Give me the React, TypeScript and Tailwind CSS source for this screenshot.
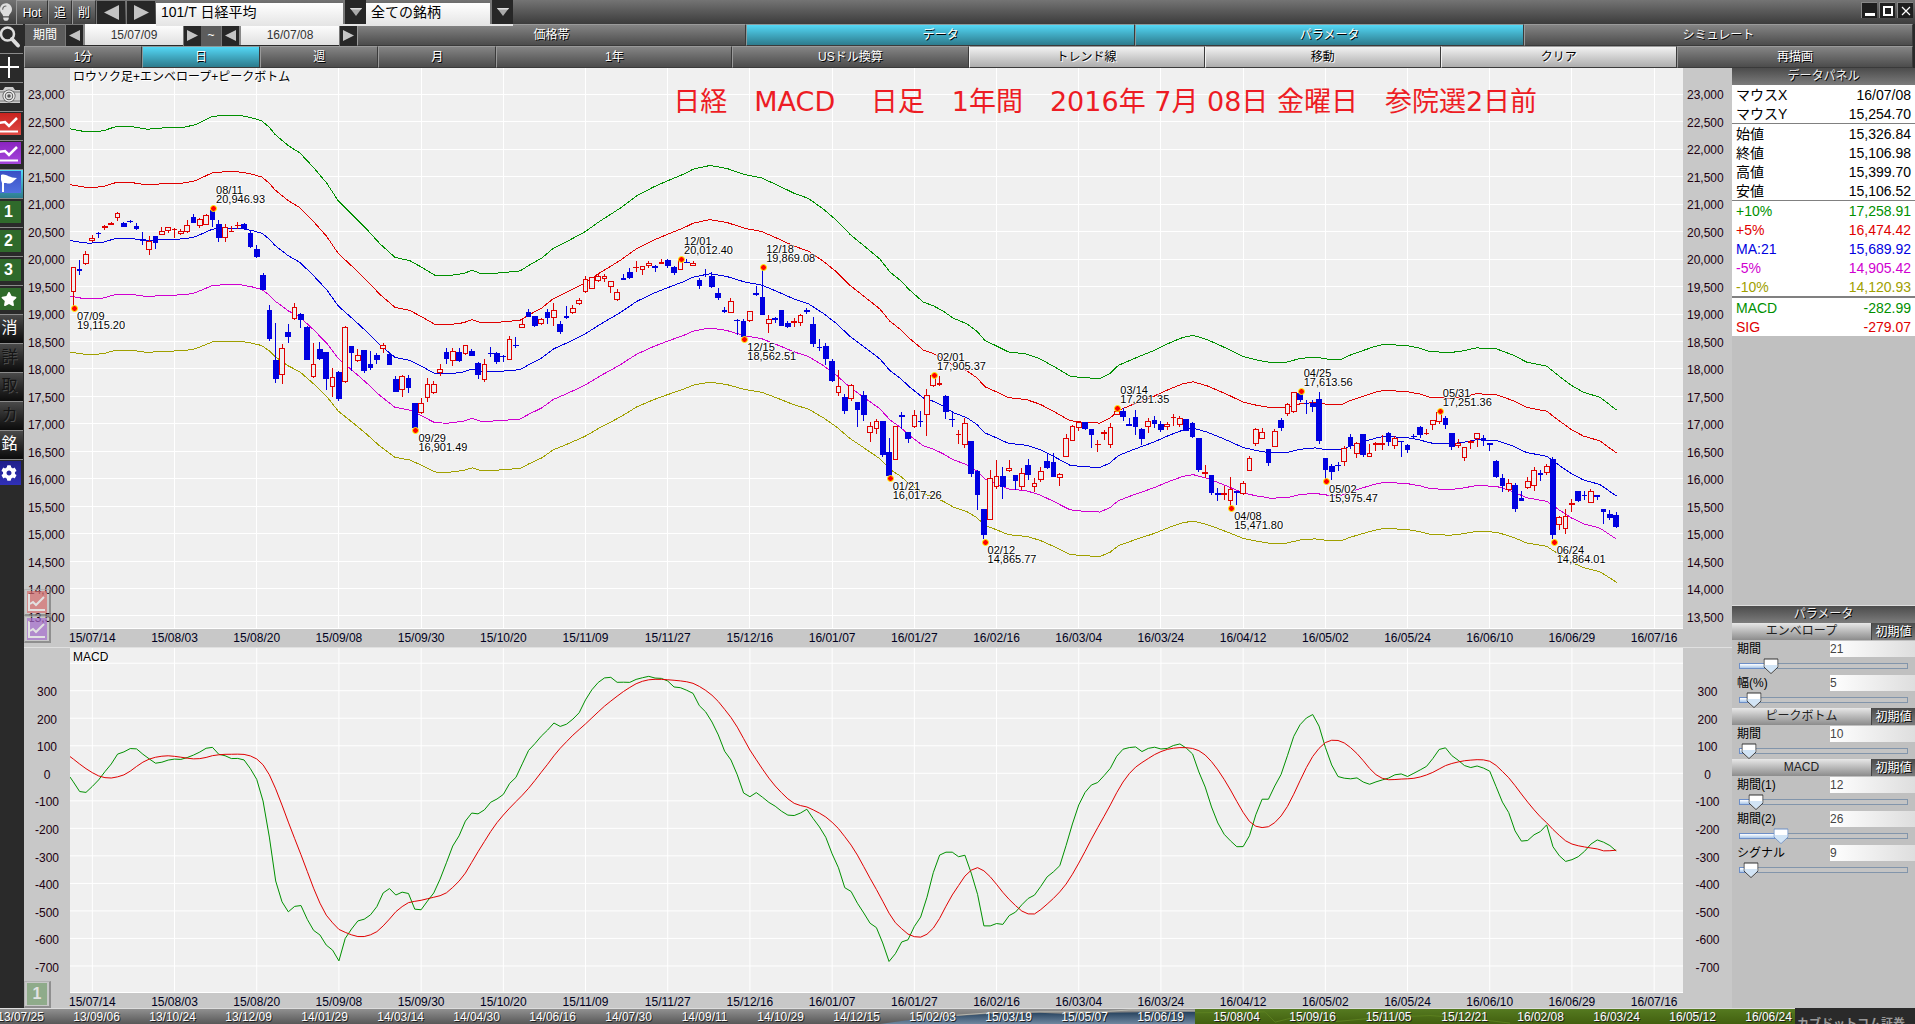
import React, { useState } from 'react';
import { FaCog, FaLightbulb, FaStar } from 'react-icons/fa';

// ---------- price data ----------

// Plot space: three units per screen pixel, origin at the top left of the plot
const PLOT_W = 4839;
const PRICE_H = 1683;
const MACD_H = 1035;

const candleX = (i: number) => 10 + i * 18.97;
const priceToY = (v: number) => 79.5 + (23000 - v) * 0.164844;
const yToPrice = (y: number) => 23000 - (y - 79.5) / 0.164844;
const macdToY = (v: number) => 377.4 - v * 0.829;

// Each block holds candles [open, high, low, close] and moving average points
// [x, y] as plot heights, measured from its own dx / dy.
type Block = { dx: number; dy: number; candles: number[][]; average: number[][] };

const BLOCKS: Block[] = [
  {
    dx: -30,
    dy: -24,
    candles: [
      [695, 622, 745, 622], [627, 600, 645, 632], [611, 575, 615, 583], [542, 525, 546, 535], [519, 516, 534, 522],
      [503, 495, 512, 499], [494, 488, 496, 490], [473, 456, 482, 460], [489, 486, 503, 500], [483, 480, 491, 486],
      [498, 491, 512, 506], [538, 517, 556, 542], [569, 529, 587, 544], [528, 528, 567, 548], [524, 501, 526, 514],
      [514, 501, 521, 503], [511, 505, 534, 507], [523, 508, 526, 514], [517, 481, 521, 497], [471, 462, 490, 488],
      [499, 474, 506, 478], [496, 463, 497, 466], [452, 440, 503, 479], [492, 481, 548, 534], [535, 492, 548, 503],
      [517, 498, 518, 514], [499, 487, 509, 495], [492, 490, 508, 506], [521, 512, 564, 561], [567, 556, 594, 590],
      [645, 639, 692, 690], [750, 736, 845, 836], [900, 790, 971, 959], [946, 853, 974, 866], [816, 793, 849, 830],
      [778, 730, 780, 742], [762, 759, 806, 779], [801, 798, 902, 899], [951, 850, 954, 913], [867, 847, 900, 896],
      [876, 876, 992, 959], [982, 925, 1013, 952], [936, 933, 1025, 1018], [967, 799, 969, 802], [858, 858, 935, 878],
      [902, 868, 908, 886], [870, 870, 941, 933], [912, 874, 930, 923], [887, 879, 914, 899], [868, 850, 881, 856],
      [882, 878, 917, 914], [960, 949, 998, 998], [991, 946, 1013, 949], [957, 945, 1001, 986], [1032, 1032, 1109, 1106],
      [1060, 1015, 1064, 1030], [1015, 955, 1028, 973], [1000, 964, 1004, 974], [940, 913, 948, 928], [877, 865, 914, 896],
      [902, 865, 920, 874], [876, 864, 908, 902], [883, 857, 885, 857], [873, 867, 890, 887], [909, 907, 957, 944],
      [961, 898, 968, 913], [879, 862, 891, 882], [880, 877, 914, 905], [888, 885, 906, 892], [901, 829, 902, 838],
      [855, 831, 866, 858], [803, 775, 806, 793], [756, 747, 773, 770], [769, 769, 803, 797],
    ],
    average: [
      [31, 542], [48, 545], [65, 548], [85, 550], [110, 549], [132, 547], [150, 541], [172, 535], [215, 536], [262, 543],
      [300, 540], [350, 538], [375, 537], [405, 531], [435, 518], [457, 508], [495, 505], [545, 506], [575, 512], [605, 520],
      [627, 537], [645, 557], [685, 588], [720, 608], [760, 647], [800, 690], [835, 739], [880, 779], [920, 816], [960, 856],
      [1005, 893], [1050, 902], [1085, 920], [1125, 942], [1165, 943], [1210, 937], [1237, 928], [1262, 937], [1310, 936],
      [1380, 930],
    ],
  },
  {
    dx: 1050,
    dy: 246,
    candles: [
      [523, 505, 525, 508], [486, 477, 524, 503], [505, 460, 530, 482], [522, 515, 554, 545], [500, 468, 507, 504],
      [488, 466, 494, 475], [461, 445, 466, 452], [427, 379, 429, 388], [418, 382, 418, 382], [394, 372, 396, 379],
      [388, 373, 396, 380], [412, 393, 431, 394], [451, 418, 453, 427], [386, 372, 389, 389], [367, 354, 389, 383],
      [355, 333, 368, 352], [361, 349, 377, 349], [349, 334, 356, 340], [350, 347, 366, 353], [341, 328, 342, 337],
      [331, 328, 356, 347], [352, 348, 377, 368], [361, 325, 362, 331], [336, 328, 341, 339], [347, 334, 350, 340],
      [390, 384, 419, 407], [373, 358, 383, 376], [378, 368, 416, 410], [430, 415, 452, 443], [480, 471, 489, 486],
      [490, 445, 491, 454], [510, 508, 557, 513], [513, 508, 566, 562], [514, 485, 518, 485], [431, 408, 440, 434],
      [442, 354, 497, 495], [521, 496, 551, 508], [505, 502, 521, 509], [481, 481, 530, 527], [521, 515, 536, 530],
      [519, 504, 533, 514], [520, 492, 530, 496], [481, 475, 492, 486], [522, 502, 593, 581], [591, 568, 605, 594],
      [588, 580, 646, 626], [633, 628, 698, 695], [731, 660, 740, 709], [744, 733, 794, 785], [748, 703, 755, 706],
      [759, 757, 833, 782], [736, 724, 815, 797], [851, 817, 878, 829], [838, 808, 854, 814], [816, 816, 922, 917],
      [909, 865, 985, 980], [931, 829, 931, 829],
    ],
    average: [
      [330, 643], [365, 625], [400, 598], [440, 580], [495, 553], [540, 524], [600, 489], [650, 455], [700, 431], [745, 413],
      [790, 396], [820, 382], [870, 372], [920, 380], [975, 397], [1025, 406], [1080, 429], [1120, 447], [1165, 462],
      [1210, 491], [1250, 522], [1290, 560], [1330, 590], [1380, 628], [1410, 663],
    ],
  },
  {
    dx: 2190,
    dy: 516,
    candles: [
      [528, 516, 568, 532], [579, 576, 611, 599], [562, 511, 564, 526], [544, 514, 563, 547], [526, 448, 590, 466],
      [439, 404, 443, 408], [437, 408, 440, 430], [471, 465, 538, 518], [539, 514, 563, 542], [587, 570, 614, 583],
      [617, 534, 626, 552], [606, 606, 713, 702], [696, 690, 812, 765], [810, 807, 900, 887], [841, 690, 841, 715],
      [742, 660, 749, 710], [711, 681, 779, 743], [694, 660, 698, 685], [708, 708, 752, 723], [743, 684, 750, 700],
      [678, 657, 720, 707], [742, 714, 758, 730], [721, 682, 726, 694], [666, 639, 687, 684], [667, 640, 713, 711],
      [715, 699, 740, 703], [653, 582, 653, 595], [604, 555, 605, 559], [566, 544, 574, 547], [549, 549, 570, 567],
      [570, 567, 624, 587], [616, 601, 636, 613], [583, 570, 600, 577], [617, 549, 624, 562], [526, 506, 527, 515],
      [516, 505, 545, 531], [555, 535, 560, 558], [534, 510, 585, 561], [570, 564, 617, 597], [563, 534, 579, 544],
      [541, 529, 564, 552], [555, 543, 578, 570], [562, 546, 572, 553], [536, 522, 560, 532], [556, 529, 563, 536],
      [540, 537, 573, 573], [552, 546, 594, 591], [597, 597, 698, 690], [703, 675, 714, 697], [708, 705, 767, 759],
      [762, 744, 783, 765], [765, 740, 780, 760], [785, 711, 798, 748], [756, 753, 797, 759], [763, 724, 767, 730],
      [694, 648, 694, 655], [613, 565, 620, 568], [598, 565, 598, 577], [630, 630, 678, 671], [622, 567, 622, 574],
    ],
    average: [
      [300, 415], [330, 443], [370, 475], [400, 485], [430, 500], [460, 519], [500, 534], [530, 554], [555, 580], [590, 595],
      [625, 611], [680, 617], [720, 630], [760, 650], [810, 677], [845, 681], [900, 684], [930, 670], [955, 648], [1000, 630],
      [1060, 608], [1110, 586], [1150, 571], [1180, 566], [1220, 577], [1260, 593], [1290, 606], [1330, 624], [1370, 633],
      [1400, 638],
    ],
  },
  {
    dx: 3540,
    dy: 696,
    candles: [
      [363, 354, 395, 386], [343, 310, 349, 314], [338, 277, 341, 277], [282, 275, 306, 300], [311, 300, 342, 314],
      [312, 302, 336, 323], [300, 276, 432, 425], [477, 477, 545, 512], [501, 492, 540, 518], [497, 486, 513, 500],
      [487, 438, 500, 445], [414, 402, 449, 440], [463, 427, 476, 430], [405, 402, 473, 467], [472, 432, 473, 460],
      [436, 428, 455, 430], [436, 405, 452, 430], [402, 396, 440, 428], [440, 408, 447, 415], [425, 423, 471, 428],
      [438, 434, 461, 452], [410, 402, 417, 413], [384, 378, 415, 407], [404, 387, 406, 400], [376, 361, 390, 361],
      [367, 330, 374, 338], [357, 348, 389, 377], [402, 402, 452, 443], [439, 417, 445, 430], [475, 442, 485, 442],
      [431, 420, 449, 425], [418, 401, 443, 401], [415, 405, 440, 425], [432, 429, 455, 436], [484, 480, 536, 533],
      [537, 522, 578, 560], [571, 537, 578, 550], [558, 549, 638, 629], [597, 573, 605, 603], [565, 532, 567, 544],
      [559, 502, 575, 511], [522, 510, 543, 525], [520, 492, 527, 499], [480, 471, 720, 707], [676, 648, 692, 652],
      [688, 628, 704, 649], [616, 598, 638, 610], [576, 573, 608, 605], [586, 573, 600, 589], [610, 568, 610, 574],
      [588, 585, 602, 591], [630, 630, 674, 638], [645, 630, 662, 656], [648, 636, 687, 683],
    ],
    average: [
      [60, 460], [110, 459], [150, 449], [195, 445], [235, 451], [275, 451], [300, 440], [340, 427], [375, 416], [398, 411],
      [465, 413], [510, 421], [540, 430], [600, 433], [640, 428], [680, 420], [740, 423], [790, 440], [830, 459], [890, 470],
      [930, 499], [965, 523], [1000, 541], [1050, 555], [1100, 590],
    ],
  },
];

const candles = BLOCKS.flatMap((b) => b.candles.map((c) => c.map((y) => y + b.dy)));
const average = BLOCKS.flatMap((b) => b.average.map(([x, y]) => [x + b.dx, yToPrice(y + b.dy)]));

const envelopes = [
  { rate: 1.1, color: '#009000' },
  { rate: 1.05, color: '#e00000' },
  { rate: 1, color: '#0000e0' },
  { rate: 0.95, color: '#d000d0' },
  { rate: 0.9, color: '#a0a000' },
];

// MACD(12, 26) with a 9 day simple average as its signal
const calcMacd = () => {
  let fast = 20338;
  let slow = 20330;
  const values = [97, 82, 82, 83, 63, 46, 31, 13];
  candles.forEach((c) => {
    const close = yToPrice(c[3]);
    fast += (close - fast) * (2 / 13);
    slow += (close - slow) * (2 / 27);
    values.push(fast - slow);
  });
  const macd = values.slice(8);
  const signal = macd.map((_, i) => values.slice(i, i + 9).reduce((a, b) => a + b, 0) / 9);
  return { macd, signal };
};
const { macd, signal } = calcMacd();

// The line is carried half a day back so that it meets the left edge
const linePoints = (values: number[]) =>
  [values[0] + (values[0] - values[1]) / 2, ...values]
    .map((v, i) => `${i === 0 ? 0 : candleX(i - 1)},${macdToY(v)}`)
    .join(' ');

const peaks = [
  { i: 0, date: '07/09', price: '19,115.20', top: false },
  { i: 22, date: '08/11', price: '20,946.93', top: true },
  { i: 54, date: '09/29', price: '16,901.49', top: false },
  { i: 96, date: '12/01', price: '20,012.40', top: true },
  { i: 106, date: '12/15', price: '18,562.51', top: false },
  { i: 109, date: '12/18', price: '19,869.08', top: true },
  { i: 129, date: '01/21', price: '16,017.26', top: false },
  { i: 136, date: '02/01', price: '17,905.37', top: true },
  { i: 144, date: '02/12', price: '14,865.77', top: false },
  { i: 165, date: '03/14', price: '17,291.35', top: true },
  { i: 183, date: '04/08', price: '15,471.80', top: false },
  { i: 194, date: '04/25', price: '17,613.56', top: true },
  { i: 198, date: '05/02', price: '15,975.47', top: false },
  { i: 216, date: '05/31', price: '17,251.36', top: true },
  { i: 234, date: '06/24', price: '14,864.01', top: false },
];

const days = [
  '15/07/14', '15/08/03', '15/08/20', '15/09/08', '15/09/30', '15/10/20', '15/11/09', '15/11/27', '15/12/16', '16/01/07',
  '16/01/27', '16/02/16', '16/03/04', '16/03/24', '16/04/12', '16/05/02', '16/05/24', '16/06/10', '16/06/29', '16/07/16',
];
const dayX = (k: number) => 67 + k * 246.6;

const timeline = [
  '13/07/25', '13/09/06', '13/10/24', '13/12/09', '14/01/29', '14/03/14', '14/04/30', '14/06/16', '14/07/30', '14/09/11',
  '14/10/29', '14/12/15', '15/02/03', '15/03/19', '15/05/07', '15/06/19', '15/08/04', '15/09/16', '15/11/05', '15/12/21',
  '16/02/08', '16/03/24', '16/05/12', '16/06/24',
];

const priceLevels = Array.from({ length: 20 }, (_, k) => 23000 - k * 500);
const macdLevels = Array.from({ length: 12 }, (_, k) => 400 - k * 100);

const pct = (v: number, total: number) => `${(v / total) * 100}%`;

// ---------- toolbar ----------

const tones = {
  gray: 'bg-linear-to-b from-[#858585] to-[#4c4c4c] text-white border-t-[#9a9a9a] border-l-[#9a9a9a] [text-shadow:1px_1px_0_#000]',
  cyan: 'bg-linear-to-b from-[#54d8f6] to-[#2d7b8d] text-white border-t-[#8b9a9c] border-l-[#8b9a9c] [text-shadow:1px_1px_0_#000]',
  light: 'bg-linear-to-b from-[#f2f2f2] to-[#adadad] text-black border-t-[#9a9a9a] border-l-[#f2f2f2] [text-shadow:1px_1px_0_#fff]',
};

const BarButton: React.FC<{ label: string; tone?: keyof typeof tones; wide?: boolean }> = ({ label, tone = 'gray', wide }) => (
  <button
    className={`h-[22px] min-w-0 border border-r-[#3a3a3a] border-b-[#3a3a3a] text-xs leading-4 ${
      wide ? 'col-span-2' : ''
    } ${tones[tone]}`}
  >
    {label}
  </button>
);

const ArrowButton: React.FC<{ dir: 'left' | 'right'; label: string; big?: boolean }> = ({ dir, label, big }) => (
  <button
    aria-label={label}
    className={`flex items-center justify-center bg-[#272727] border-t border-l border-[#777] ${
      big ? 'w-[29px] h-6' : 'w-[18px] h-[22px]'
    }`}
  >
    <svg viewBox="0 0 12 12" className={big ? 'w-[15px] h-[15px]' : 'w-[11px] h-[11px]'}>
      <path d={dir === 'left' ? 'M12 0V12L0 6Z' : 'M0 0V12L12 6Z'} fill="#c4c4c4" />
    </svg>
  </button>
);

const Combo: React.FC<{ label: string; value: string; className: string }> = ({ label, value, className }) => (
  <div className={`relative h-6 ${className}`}>
    <select
      aria-label={label}
      className="appearance-none w-full h-[23px] pl-[5px] pb-[5px] bg-linear-to-b from-white to-[#e4e4e4] text-black text-sm leading-4"
    >
      <option>{value}</option>
    </select>
    <span className="pointer-events-none absolute right-0 top-0 w-[23px] h-6 flex items-center justify-center bg-[#272727] border-l-2 border-[#777]">
      <svg viewBox="0 0 12 8" className="w-3 h-2">
        <path d="M0 0H12L6 8Z" fill="#aaa" />
        <path d="M0 0H12L11 1.500H1Z" fill="#ddd" />
      </svg>
    </span>
  </div>
);

const DateInput: React.FC<{ label: string; value: string }> = ({ label, value }) => (
  <input
    aria-label={label}
    defaultValue={value}
    className="w-[100px] h-[21px] bg-linear-to-b from-white to-[#e0e0e0] border-l-2 border-[#888] text-center text-xs text-[#333]"
  />
);

const TopButton: React.FC<{ label: string; className: string }> = ({ label, className }) => (
  <button
    className={`h-6 bg-linear-to-b from-[#7a7a7a] to-[#434343] border-l border-t border-[#999] border-r border-r-[#333] text-white text-xs [text-shadow:1px_1px_0_#000] ${className}`}
  >
    {label}
  </button>
);

// ---------- sidebar ----------

const Tile: React.FC<{ from: string; to: string; children: React.ReactNode }> = ({ from, to, children }) => (
  <svg viewBox="0 1 23 28" className="w-[23px] h-7 block">
    <defs>
      <linearGradient id={`tile${from.slice(1)}`} x1="0" y1="0" x2="0" y2="1">
        <stop offset="0" stopColor={from} />
        <stop offset="1" stopColor={to} />
      </linearGradient>
    </defs>
    <rect x="-1" y="3" width="22" height="22" fill={`url(#tile${from.slice(1)})`} />
    {children}
  </svg>
);

const ChartMark = () => (
  <g fill="none" stroke="#fff">
    <path d="M-1 13 L5 12 L9 16 L17 8" strokeWidth="2.500" />
    <path d="M-1 21.500H18" strokeWidth="2" />
  </g>
);

const NumberTile: React.FC<{ text: string }> = ({ text }) => (
  <span className="flex items-center justify-center w-[21px] h-[22px] pr-1 bg-[#2f6a2b] text-white text-base leading-4 font-bold">
    {text}
  </span>
);

const sideButtons: { label: string; icon?: React.ReactNode; text?: string; off?: boolean; active?: boolean }[] = [
  {
    label: '検索',
    icon: (
      <svg viewBox="0 1 23 28" className="w-[23px] h-7 block" fill="none" stroke="#ddd">
        <circle cx="7.500" cy="11" r="6.500" strokeWidth="2.500" />
        <path d="M12 16L18 22.500" strokeWidth="4" strokeLinecap="round" />
      </svg>
    ),
  },
  {
    label: '十字線',
    icon: (
      <svg viewBox="0 1 23 28" className="w-[23px] h-7 block" stroke="#fff" strokeWidth="2">
        <path d="M9 5V26M0 15H19" />
      </svg>
    ),
  },
  {
    label: '撮影',
    icon: (
      <svg viewBox="0 1 23 28" className="w-[23px] h-7 block">
        <path d="M-2 9H3L5 6H13L15 9H20V22H-2Z" fill="#ccc" />
        <path d="M-2 11H20M-2 20H20" stroke="#777" />
        <circle cx="9" cy="15" r="6.500" fill="#555" />
        <circle cx="9" cy="15" r="5" fill="none" stroke="#eee" strokeWidth="1.500" />
        <circle cx="9" cy="15" r="2.500" fill="none" stroke="#ddd" strokeWidth="1.500" />
      </svg>
    ),
  },
  { label: 'チャート', icon: <Tile from="#c8231f" to="#e04a44"><ChartMark /></Tile> },
  { label: '指標', icon: <Tile from="#8a24c0" to="#a646dc"><ChartMark /></Tile> },
  {
    label: '旗',
    active: true,
    icon: (
      <Tile from="#3a4fc4" to="#5070e0">
        <path d="M1 7C6 5 8 10 17 10C13 13 12 17 6 15H4V24H2V15L1 12Z" fill="#fff" />
      </Tile>
    ),
  },
  { label: '画面1', icon: <NumberTile text="1" /> },
  { label: '画面2', icon: <NumberTile text="2" /> },
  { label: '画面3', icon: <NumberTile text="3" /> },
  {
    label: 'お気に入り',
    icon: (
      <span className="flex items-center justify-center w-[21px] h-[22px] pr-1 bg-[#2f6a2b]">
        <FaStar className="w-4 h-4 text-white" />
      </span>
    ),
  },
  { label: '消', text: '消' },
  { label: '詳', text: '詳', off: true },
  { label: '取', text: '取', off: true },
  { label: 'カ', text: 'カ', off: true },
  { label: '銘', text: '銘' },
  {
    label: '設定',
    icon: (
      <span className="flex items-center justify-center w-[21px] h-6 pr-1 bg-linear-to-b from-[#20208a] to-[#3030b8]">
        <FaCog className="w-4 h-4 text-white" />
      </span>
    ),
  },
];

const Sidebar = () => (
  <aside className="w-6 shrink-0 bg-[#2a2a2a] flex flex-col">
    {sideButtons.map((b) => (
      <button
        key={b.label}
        aria-label={b.label}
        className={`h-[29px] w-[23px] pb-0.5 border-t border-[#8a8a8a] overflow-hidden flex items-center ${
          b.active ? 'bg-linear-to-b from-[#54d8f6] to-[#2d7b8d]' : b.text ? 'bg-linear-to-b from-[#4a4a4a] to-[#0c0c0c]' : 'bg-[#2a2a2a]'
        }`}
      >
        {b.icon ?? (
          <span className={`w-[19px] text-center text-base leading-5 ${b.off ? 'text-[#141414] [text-shadow:1px_1px_0_#4c4c4c]' : 'text-white'}`}>
            {b.text}
          </span>
        )}
      </button>
    ))}
  </aside>
);

// ---------- charts ----------

type ChartProps = {
  title: string;
  height: number;
  levels: { y: number; label: string }[];
  centered?: boolean;
  children: React.ReactNode;
  overlay?: React.ReactNode;
  corner?: React.ReactNode;
  className: string;
  footClassName: string;
};

const Levels: React.FC<{ levels: ChartProps['levels']; height: number; centered?: boolean }> = ({ levels, height, centered }) => (
  <div className="relative text-xs leading-4 text-[#200010]">
    {levels.map((l) => (
      <span
        key={l.y}
        className={`absolute -translate-y-1/2 ${centered ? 'inset-x-0 text-center' : 'left-1'}`}
        style={{ top: pct(l.y + 2, height) }}
      >
        {l.label}
      </span>
    ))}
  </div>
);

const Chart: React.FC<ChartProps> = ({ title, height, levels, centered, children, overlay, corner, className, footClassName }) => (
  <section className={`relative min-h-0 grid grid-cols-[46px_1fr_49px] grid-rows-[1fr_auto] bg-[#c8c8c8] ${className}`}>
    <Levels levels={levels} height={height} centered={centered} />
    <div className="relative min-h-0 bg-[#f0f0f0] border-b border-white">
      <svg viewBox={`0 0 ${PLOT_W} ${height}`} preserveAspectRatio="none" shapeRendering="crispEdges" className="absolute inset-0 w-full h-full">
        <g stroke="#fff" strokeWidth="1">
          {levels.map((l) => (
            <line key={l.y} x1="0" x2={PLOT_W} y1={l.y} y2={l.y} vectorEffect="non-scaling-stroke" />
          ))}
          {days.map((d, k) => (
            <line key={d} x1={dayX(k)} x2={dayX(k)} y1="0" y2={height} vectorEffect="non-scaling-stroke" />
          ))}
        </g>
        {children}
      </svg>
      <h2 className="absolute left-[3px] top-px text-xs leading-4 text-black [text-shadow:1px_1px_0_#fff]">{title}</h2>
      {overlay}
    </div>
    <Levels levels={levels} height={height} centered={centered} />
    <div className={`relative col-start-2 text-xs leading-4 text-[#000020] ${footClassName}`}>
      {days.map((d, k) => (
        <span key={d} className="absolute top-px -translate-x-1/2" style={{ left: pct(dayX(k), PLOT_W) }}>
          {d}
        </span>
      ))}
    </div>
    {corner}
  </section>
);

const Candles = () => (
  <g strokeWidth="1">
    {candles.map(([open, high, low, close], i) => {
      const x = candleX(i);
      const up = close < open;
      const color = up ? '#e00000' : '#0000e0';
      const top = Math.min(open, close);
      const size = Math.abs(open - close);
      return (
        <g key={i} stroke={color}>
          <line x1={x} x2={x} y1={high} y2={low} vectorEffect="non-scaling-stroke" />
          <rect
            x={x - 7}
            y={top + 1}
            width="14"
            height={Math.max(size - 2, 1)}
            fill={up ? '#f0f0f0' : color}
            vectorEffect="non-scaling-stroke"
          />
        </g>
      );
    })}
  </g>
);

const PeakLabels = () => (
  <>
    {peaks.map((p) => (
      <div
        key={p.date}
        className="absolute w-0 h-0"
        style={{ left: pct(candleX(p.i) + 2, PLOT_W), top: pct(priceToY(Number(p.price.replace(',', ''))) + 2, PRICE_H) }}
      >
        <span className="absolute -left-[3px] -top-[3px] w-[7px] h-[7px] rounded-full bg-[#f00] border border-[#ff0]" />
        <p
          className={`absolute left-[3px] text-[11px] leading-[9px] text-black [text-shadow:1px_0_0_#fff,-1px_0_0_#fff,0_1px_0_#fff,0_-1px_0_#fff] ${
            p.top ? 'bottom-1' : 'top-1'
          }`}
        >
          {p.date}
          <br />
          {p.price}
        </p>
      </div>
    ))}
  </>
);

const MiniTile: React.FC<{ label: string; className: string; children: React.ReactNode }> = ({ label, className, children }) => (
  <button
    aria-label={label}
    className="w-[27px] h-[27px] p-0.5 border-t border-l border-r-2 border-b-2 border-[#aaa] border-r-[#777] border-b-[#777] opacity-70 flex items-center justify-center"
  >
    <span className={`w-[22px] h-[22px] flex items-center justify-center ${className}`}>{children}</span>
  </button>
);

const MiniChart = () => (
  <svg viewBox="0 0 20 20" className="w-5 h-5" fill="none" stroke="#eee" strokeWidth="2">
    <path d="M2 2V18H18" />
    <path d="M3 12L6 10L9 13L17 5" />
  </svg>
);

// ---------- side panel ----------

const quotes = [
  [
    { name: 'マウスX', value: '16/07/08', color: 'text-black' },
    { name: 'マウスY', value: '15,254.70', color: 'text-black' },
  ],
  [
    { name: '始値', value: '15,326.84', color: 'text-black' },
    { name: '終値', value: '15,106.98', color: 'text-black' },
    { name: '高値', value: '15,399.70', color: 'text-black' },
    { name: '安値', value: '15,106.52', color: 'text-black' },
  ],
  [
    { name: '+10%', value: '17,258.91', color: 'text-[#009000]' },
    { name: '+5%', value: '16,474.42', color: 'text-[#e00000]' },
    { name: 'MA:21', value: '15,689.92', color: 'text-[#0000e0]' },
    { name: '-5%', value: '14,905.42', color: 'text-[#d000d0]' },
    { name: '-10%', value: '14,120.93', color: 'text-[#a0a000]' },
  ],
  [
    { name: 'MACD', value: '-282.99', color: 'text-[#009000]' },
    { name: 'SIG', value: '-279.07', color: 'text-[#e00000]' },
  ],
];

const groupBorders = ['', 'border-t border-[#808080]', 'border-t border-[#808080]', 'border-t-2 border-[#808080]'];

const paramGroups = [
  {
    title: 'エンベロープ',
    rows: [
      { id: 'env-period', name: '期間', value: 21, thumb: 19, active: false },
      { id: 'env-width', name: '幅(%)', value: 5, thumb: 9, active: false },
    ],
  },
  { title: 'ピークボトム', rows: [{ id: 'peak-period', name: '期間', value: 10, thumb: 6, active: false }] },
  {
    title: 'MACD',
    rows: [
      { id: 'macd-fast', name: '期間(1)', value: 12, thumb: 10, active: false },
      { id: 'macd-slow', name: '期間(2)', value: 26, thumb: 25, active: true },
      { id: 'macd-signal', name: 'シグナル', value: 9, thumb: 7, active: false },
    ],
  },
];

type Row = (typeof paramGroups)[number]['rows'][number];

const ParamRow: React.FC<{ row: Row }> = ({ row }) => {
  const [pos, setPos] = useState(row.thumb);
  return (
    <div className="h-[34px]">
      <div className="flex items-center h-[18px]">
        <label htmlFor={row.id} className="w-[98px] pl-[5px] text-xs leading-4 text-black">
          {row.name}
        </label>
        <input
          id={row.id}
          defaultValue={row.value}
          className="w-0 grow h-4 bg-linear-to-r from-white to-[#dedede] text-xs leading-4 text-[#444]"
        />
      </div>
      <div className="relative h-4 mx-[7px]">
        <div className="absolute inset-x-0 top-[5px] h-[6px] border border-[#8295ab] bg-[#c4c4c4]" />
        <div className="absolute left-0 top-[5px] h-[6px] border border-[#6d8fc8] bg-linear-to-b from-white to-[#a9c6e8]" style={{ width: `${pos}%` }} />
        <svg viewBox="0 0 15 16" className="absolute top-0 w-[15px] h-4 -translate-x-1/2" style={{ left: `${pos}%` }}>
          <path d="M.5 1H14.500V9L7.500 15.500L.5 9Z" fill="#fff" stroke={row.active ? '#6c8fc4' : '#333'} />
          <path d="M1 7H14V9L7.500 14.800L1 9Z" fill="#b4d2ee" opacity="0.600" />
        </svg>
        <input
          type="range"
          aria-label={row.name}
          min={0}
          max={100}
          value={pos}
          onChange={(e) => setPos(Number(e.target.value))}
          className="absolute inset-0 w-full opacity-0"
        />
      </div>
    </div>
  );
};

const PanelHeader: React.FC<{ title: string }> = ({ title }) => (
  <h2 className="h-[17px] bg-linear-to-b from-[#4c4c4c] to-[#7c7c7c] text-center text-xs leading-4 text-[#eee] [text-shadow:1px_1px_0_#000]">
    {title}
  </h2>
);

const SidePanel = () => (
  <aside className="w-[183px] shrink-0 bg-[#c0c0c0] flex flex-col">
    <PanelHeader title="データパネル" />
    <table className="w-full bg-white border-collapse text-sm leading-[18px]">
      {quotes.map((group, g) => (
        <tbody key={g} className={groupBorders[g]}>
          {group.map((q) => (
            <tr key={q.name} className={`h-[19px] ${q.color}`}>
              <th className="p-0 pl-1 pt-px text-left font-normal">{q.name}</th>
              <td className="p-0 pr-1 pt-px text-right">{q.value}</td>
            </tr>
          ))}
        </tbody>
      ))}
    </table>
    <div className="grow border-b border-[#ddd]" />
    <div className="h-[402px]">
      <PanelHeader title="パラメータ" />
      {paramGroups.map((group) => (
        <div key={group.title}>
          <div className="flex h-[17px]">
            <h3 className="grow bg-linear-to-b from-[#e8e8e8] to-[#8c8c8c] text-center text-xs leading-4 text-[#222]">{group.title}</h3>
            <button className="w-11 bg-linear-to-b from-[#4c4c4c] to-[#7c7c7c] border-l border-[#444] text-xs leading-4 text-white [text-shadow:1px_1px_0_#000]">
              初期値
            </button>
          </div>
          {group.rows.map((row) => (
            <ParamRow key={row.id} row={row} />
          ))}
        </div>
      ))}
    </div>
  </aside>
);

// ---------- page ----------

const Timeline = () => (
  <footer className="flex h-4 bg-[#2a2a2a] shrink-0">
    <div className="relative grow overflow-hidden border-t border-[#ddd] bg-linear-to-b from-[#909090] to-[#585858]">
      <svg viewBox="0 0 1795 16" preserveAspectRatio="none" className="absolute inset-0 w-full h-full">
        <defs>
          <linearGradient id="hill" x1="0" y1="0" x2="0" y2="1">
            <stop offset="0" stopColor="#24405c" />
            <stop offset="1" stopColor="#7088a0" />
          </linearGradient>
          <linearGradient id="range" x1="0" y1="0" x2="0" y2="1">
            <stop offset="0" stopColor="#557a20" />
            <stop offset="1" stopColor="#42600f" />
          </linearGradient>
        </defs>
        <path d="M880 16L920 10L950 8L990 5L1040 4L1060 5L1100 4L1195 3V16Z" fill="url(#hill)" />
        <path d="M940 8L990 4L1040 3L1100 3L1130 1L1195 2" fill="none" stroke="#b8b8b0" />
        <rect x="1195" y="0" width="600" height="16" fill="url(#range)" />
        <path d="M1195 4L1265 3L1275 14L1290 10L1300 15L1340 13L1380 9L1430 7L1470 10L1510 15" fill="none" stroke="#5c8020" />
      </svg>
      {timeline.map((d, k) => (
        <span
          key={d}
          className="absolute top-0 -translate-x-1/2 whitespace-nowrap text-xs leading-4 text-white [text-shadow:1px_1px_0_#222]"
          style={{ left: pct(20.6 + k * 76, 1795) }}
        >
          {d}
        </span>
      ))}
    </div>
    <div className="w-[120px] h-4 pt-2 pl-0.5 overflow-hidden whitespace-nowrap text-xs leading-4 font-bold text-[#999]">カブドットコム証券</div>
  </footer>
);

const winButton = 'w-4 h-4 bg-[#1e1e1e] border-t border-l border-[#888] flex items-center justify-center';

export default function App() {
  return (
    <div className="h-screen flex flex-col overflow-hidden bg-[#2a2a2a] font-['Liberation_Sans','Noto_Sans_CJK_JP',sans-serif]">
      <header className="flex h-6 shrink-0 bg-linear-to-b from-[#747474] to-[#3c3c3c]">
        <button aria-label="ヒント" className="w-4 h-6 flex items-center">
          <FaLightbulb className="w-3 h-[18px] text-[#ddd]" />
        </button>
        <TopButton label="Hot" className="w-8" />
        <TopButton label="追" className="w-6" />
        <TopButton label="削" className="w-6" />
        <div className="flex gap-px">
          <ArrowButton dir="left" label="前の銘柄" big />
          <ArrowButton dir="right" label="次の銘柄" big />
        </div>
        <Combo label="銘柄" value="101/T 日経平均" className="w-[210px] ml-px" />
        <Combo label="グループ" value="全ての銘柄" className="w-[147px]" />
        <div className="ml-auto pt-0.5 pr-0.5 flex gap-0.5">
          <button aria-label="最小化" className={winButton}>
            <span className="w-2.5 h-[3px] mt-2 bg-white" />
          </button>
          <button aria-label="最大化" className={winButton}>
            <span className="w-2.5 h-2.5 border-2 border-white" />
          </button>
          <button aria-label="閉じる" className={winButton}>
            <svg viewBox="0 0 10 10" className="w-2.5 h-2.5" stroke="#fff" strokeWidth="1.200">
              <path d="M1 1L9 9M9 1L1 9" />
            </svg>
          </button>
        </div>
      </header>

      <div className="flex grow min-h-0">
        <Sidebar />
        <div className="flex flex-col grow min-w-0">
          <div className="flex shrink-0 h-[22px] pl-px pr-0.5">
            <div className="w-10 bg-[#5c5c5c] border-t border-[#888] text-center text-xs leading-5 text-white">期間</div>
            <ArrowButton dir="left" label="開始日を戻す" />
            <DateInput label="開始日" value="15/07/09" />
            <ArrowButton dir="right" label="開始日を進める" />
            <div className="w-5 bg-[#5c5c5c] border-t border-[#888] text-center text-xs leading-5 text-white">~</div>
            <ArrowButton dir="left" label="終了日を戻す" />
            <DateInput label="終了日" value="16/07/08" />
            <ArrowButton dir="right" label="終了日を進める" />
            <div className="grow grid grid-cols-4">
              <BarButton label="価格帯" />
              <BarButton label="データ" tone="cyan" />
              <BarButton label="パラメータ" tone="cyan" />
              <BarButton label="シミュレート" />
            </div>
          </div>
          <div className="shrink-0 h-[22px] pr-0.5 grid grid-cols-16">
            <BarButton label="1分" />
            <BarButton label="日" tone="cyan" />
            <BarButton label="週" />
            <BarButton label="月" />
            <BarButton label="1年" wide />
            <BarButton label="USドル換算" wide />
            <BarButton label="トレンド線" tone="light" wide />
            <BarButton label="移動" tone="light" wide />
            <BarButton label="クリア" tone="light" wide />
            <BarButton label="再描画" wide />
          </div>

          <div className="flex grow min-h-0">
            <main className="flex flex-col grow min-w-0">
              <Chart
                title="ロウソク足+エンベロープ+ピークボトム"
                height={PRICE_H}
                levels={priceLevels.map((v) => ({ y: priceToY(v), label: v.toLocaleString('en-US') }))}
                className="flex-[580_1_0%] border-b border-[#e0e0e0]"
                footClassName="h-[18px]"
                overlay={
                  <>
                    <PeakLabels />
                    <h1 className="absolute left-[37.400%] top-[14px] whitespace-pre text-[27px] leading-10 text-[#ed1c24] font-['DejaVu_Sans','Noto_Sans_CJK_JP',sans-serif]">
                      {'日経　MACD　 日足　1年間　2016年 7月 08日 金曜日　参院選2日前'}
                    </h1>
                  </>
                }
                corner={
                  <div className="absolute left-0 bottom-1 flex flex-col">
                    <MiniTile label="チャート設定" className="bg-[#d87070]">
                      <MiniChart />
                    </MiniTile>
                    <MiniTile label="指標設定" className="bg-[#a870d0]">
                      <MiniChart />
                    </MiniTile>
                  </div>
                }
              >
                {envelopes.map((e) => (
                  <polyline
                    key={e.rate}
                    points={average.map(([x, v]) => `${x},${priceToY(v * e.rate)}`).join(' ')}
                    fill="none"
                    stroke={e.color}
                    strokeWidth="1"
                    vectorEffect="non-scaling-stroke"
                  />
                ))}
                <Candles />
              </Chart>
              <Chart
                title="MACD"
                height={MACD_H}
                levels={macdLevels.map((v) => ({ y: macdToY(v), label: v === 400 ? '' : String(v) }))}
                centered
                className="flex-[360_1_0%]"
                footClassName="h-[15px]"
                corner={
                  <div className="absolute left-0 bottom-0">
                    <MiniTile label="画面1" className="bg-[#78a070] text-base font-bold text-[#eee]">
                      1
                    </MiniTile>
                  </div>
                }
              >
                <polyline points={linePoints(macd)} fill="none" stroke="#009000" strokeWidth="1" vectorEffect="non-scaling-stroke" />
                <polyline points={linePoints(signal)} fill="none" stroke="#e00000" strokeWidth="1" vectorEffect="non-scaling-stroke" />
              </Chart>
            </main>
            <SidePanel />
          </div>
        </div>
      </div>
      <Timeline />
    </div>
  );
}
